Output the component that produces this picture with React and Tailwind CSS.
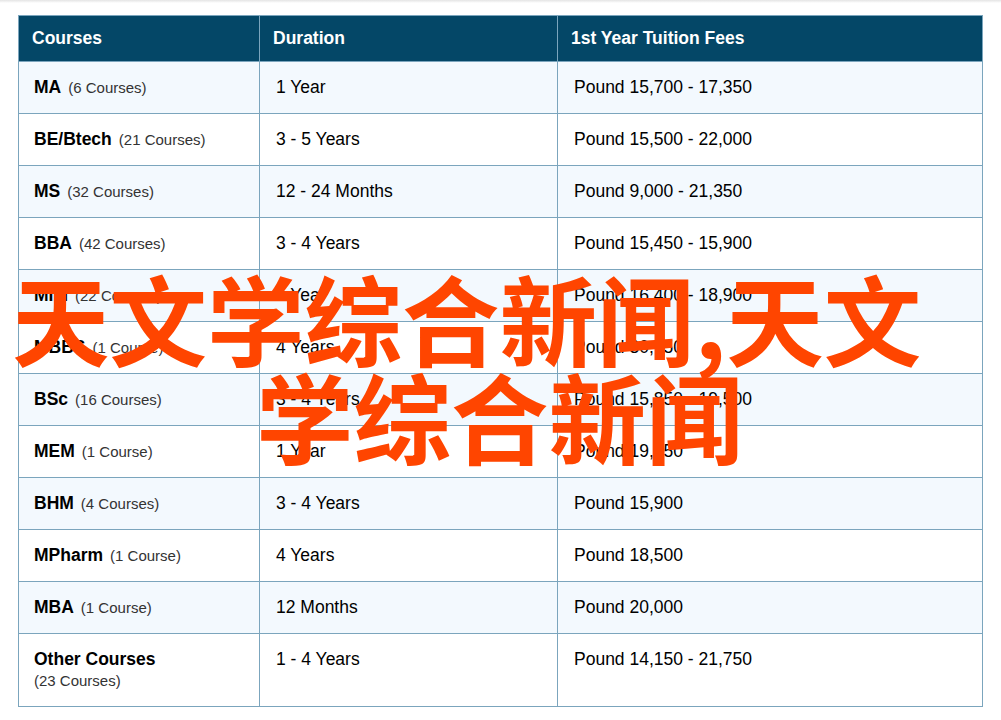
const ROWS = [
  ['MA', '(6 Courses)', '1 Year', 'Pound 15,700 - 17,350'],
  ['BE/Btech', '(21 Courses)', '3 - 5 Years', 'Pound 15,500 - 22,000'],
  ['MS', '(32 Courses)', '12 - 24 Months', 'Pound 9,000 - 21,350'],
  ['BBA', '(42 Courses)', '3 - 4 Years', 'Pound 15,450 - 15,900'],
  ['MIM', '(22 Courses)', '1 Year', 'Pound 16,400 - 18,900'],
  ['MBBS', '(1 Course)', '4 Years', 'Pound 30,750'],
  ['BSc', '(16 Courses)', '3 - 4 Years', 'Pound 15,850 - 19,500'],
  ['MEM', '(1 Course)', '1 Year', 'Pound 19,650'],
  ['BHM', '(4 Courses)', '3 - 4 Years', 'Pound 15,900'],
  ['MPharm', '(1 Course)', '4 Years', 'Pound 18,500'],
  ['MBA', '(1 Course)', '12 Months', 'Pound 20,000'],
]

const App = () => {
  return (
    <div className="relative h-[720px] w-[1001px] overflow-hidden bg-white font-['Liberation_Sans',sans-serif] text-black">
      <div className="h-[3px] bg-gradient-to-b from-[#e4e4e4] to-white" />
      <div className="pl-[18px] pt-[12px]">
        <table className="w-[965px] table-fixed border-collapse">
          <colgroup>
            <col className="w-[241px]" />
            <col className="w-[298px]" />
            <col className="w-[425px]" />
          </colgroup>
          <thead>
            <tr className="h-[46px] bg-[#044767] text-left text-[17.5px] font-bold text-white">
              <th className="border border-[#7ba5bd] pl-[13px]">Courses</th>
              <th className="border border-[#7ba5bd] pl-[13px]">Duration</th>
              <th className="border border-[#7ba5bd] pl-[13px]">1st Year Tuition Fees</th>
            </tr>
          </thead>
          <tbody>
            {ROWS.map(([name, count, duration, fees], i) => (
              <tr key={name} className={`h-[52px] text-[17.5px] ${i % 2 === 0 ? 'bg-[#f3f9fe]' : 'bg-white'}`}>
                <td className="border border-[#7ba5bd] pl-[15px]">
                  <b>{name}</b>
                  <span className="ml-[7px] text-[15px] text-[#333]">{count}</span>
                </td>
                <td className="border border-[#7ba5bd] pl-[16px]">{duration}</td>
                <td className="border border-[#7ba5bd] pl-[16px]">{fees}</td>
              </tr>
            ))}
            <tr className="h-[73px] bg-white align-top text-[17.5px]">
              <td className="border border-[#7ba5bd] pl-[15px] pt-[15px]">
                <b className="block leading-[20px]">Other Courses</b>
                <span className="mt-[2px] block text-[15px] leading-[20px] text-[#333]">(23 Courses)</span>
              </td>
              <td className="border border-[#7ba5bd] pl-[16px] pt-[15px] leading-[20px]">1 - 4 Years</td>
              <td className="border border-[#7ba5bd] pl-[16px] pt-[15px] leading-[20px]">Pound 14,150 - 21,750</td>
            </tr>
          </tbody>
        </table>
      </div>
      <div className="absolute left-0 top-[268px] whitespace-nowrap font-['Noto_Sans_CJK_SC',sans-serif] text-[97.5px] font-bold leading-[98px] text-[#ff4500]">
        <div className="ml-[12px]">天文学综合新闻,天文</div>
        <div className="ml-[256px]">学综合新闻</div>
      </div>
    </div>
  )
}

export default App
